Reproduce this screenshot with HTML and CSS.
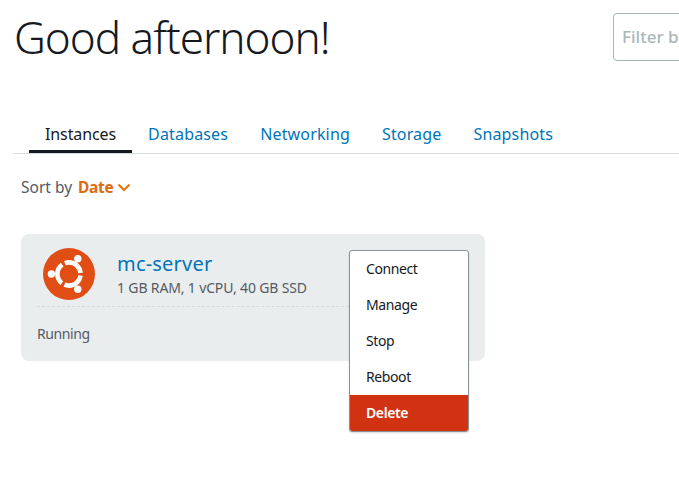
FILE: index.html
```html
<!DOCTYPE html>
<html lang="en">
<head>
    <meta charset="UTF-8">
    <meta name="viewport" content="width=device-width, initial-scale=1.0">
    <title>Home</title>
    <link rel="stylesheet" href="styles.css">
</head>
<body>

    <div class="page">
        <header class="top-bar">
            <h1>Good afternoon!</h1>
            <div class="filter-box">Filter by name</div>
        </header>

        <nav class="tabs">
            <a class="tab active" href="#">Instances</a>
            <a class="tab" href="#">Databases</a>
            <a class="tab" href="#">Networking</a>
            <a class="tab" href="#">Storage</a>
            <a class="tab" href="#">Snapshots</a>
        </nav>

        <div class="sort-row">
            Sort by <strong>Date</strong>
            <svg class="sort-arrow" width="14" height="9" viewBox="0 0 14 9">
                <path d="M1.5 1.5 L7 7 L12.5 1.5" fill="none" stroke="#ec7211" stroke-width="2"/>
            </svg>
        </div>

        <div class="instance-card">
            <div class="card-head">
                <svg class="os-logo" width="52" height="52" viewBox="-26 -26 52 52">
                    <circle r="26" fill="#e04e16"/>
                    <circle r="11.6" fill="none" stroke="#fff" stroke-width="4.6" stroke-dasharray="21.3 3" stroke-dashoffset="-1.5"/>
                    <circle cx="-17.6" cy="0" r="3.7" fill="#fff"/>
                    <circle cx="8.8" cy="-15.2" r="3.7" fill="#fff"/>
                    <circle cx="8.8" cy="15.2" r="3.7" fill="#fff"/>
                </svg>
                <div class="card-title">
                    <a href="#">mc-server</a>
                    <p>1 GB RAM, 1 vCPU, 40 GB SSD</p>
                </div>
            </div>
            <div class="card-status">Running</div>

            <ul class="action-menu">
                <li>Connect</li>
                <li>Manage</li>
                <li>Stop</li>
                <li>Reboot</li>
                <li class="danger">Delete</li>
            </ul>
        </div>
    </div>

</body>
</html>
```

FILE: styles.css
```css
/* General Styles */
* {
    margin: 0;
    padding: 0;
    box-sizing: border-box;
}

body {
    font-family: "Noto Sans", Arial, sans-serif;
    background-color: #fff;
    color: #16191f;
    overflow: hidden;
    height: 100vh;
}

.page {
    padding: 13px 0 0 13px;
}

/* Header */
.top-bar {
    display: flex;
    height: 48px;
}

.top-bar h1 {
    flex: 0 0 600px;
    font-size: 44px;
    font-weight: 300;
    line-height: 48px;
    letter-spacing: -1px;
    padding-left: 1px;
}

.filter-box {
    flex: 0 0 220px;
    height: 48px;
    border: 1px solid #aab7b8;
    border-radius: 4px;
    padding-left: 8px;
    font-size: 17px;
    font-weight: 500;
    line-height: 46px;
    color: #aab7b8;
}

/* Tabs */
.tabs {
    display: flex;
    height: 41px;
    margin-top: 52px;
    padding-left: 16px;
    border-bottom: 1px solid #d5dbdb;
}

.tab {
    height: 40px;
    padding: 2px 16px 0;
    font-size: 16px;
    line-height: 39px;
    letter-spacing: 0.16px;
    color: #0073bb;
    text-decoration: none;
}

.tab.active {
    letter-spacing: -0.1px;
    color: #16191f;
    border-bottom: 3px solid #16191f;
}

/* Sort */
.sort-row {
    display: flex;
    align-items: center;
    gap: 5px;
    height: 20px;
    margin: 23px 0 0 8px;
    font-size: 15.5px;
    color: #545b64;
}

.sort-row strong {
    margin-left: 1px;
    letter-spacing: -0.3px;
    color: #dd6b10;
}

.sort-arrow {
    margin-left: -1px;
}

/* Instance card */
.instance-card {
    position: relative;
    width: 464px;
    height: 127px;
    margin: 37px 0 0 8px;
    padding: 14px 16px 0;
    background-color: #eaeded;
    border-radius: 8px;
}

.card-head {
    display: flex;
    align-items: center;
    gap: 22px;
    height: 59px;
    padding: 0 0 7px 6px;
    border-bottom: 1px dashed #d5dbdb;
}

.card-title {
    padding-top: 2px;
}

.card-title a {
    font-size: 20px;
    line-height: 26px;
    letter-spacing: 0.2px;
    color: #0073bb;
    text-decoration: none;
}

.card-title p {
    margin-top: 1px;
    font-size: 14px;
    line-height: 20px;
    letter-spacing: -0.15px;
    color: #545b64;
}

.card-status {
    margin-top: 17px;
    font-size: 14px;
    line-height: 20px;
    letter-spacing: -0.4px;
    color: #545b64;
}

/* Action menu */
.action-menu {
    position: absolute;
    top: 16px;
    right: 16px;
    width: 120px;
    background-color: #fff;
    border: 1px solid #879596;
    border-radius: 3px;
    box-shadow: 0 1px 2px rgba(0, 0, 0, 0.15);
    overflow: hidden;
    list-style: none;
}

.action-menu li {
    height: 36px;
    padding-left: 16px;
    font-size: 14px;
    line-height: 36px;
    letter-spacing: -0.4px;
}

.action-menu .danger {
    background-color: #d13212;
    color: #fff;
    font-weight: 600;
}
```
